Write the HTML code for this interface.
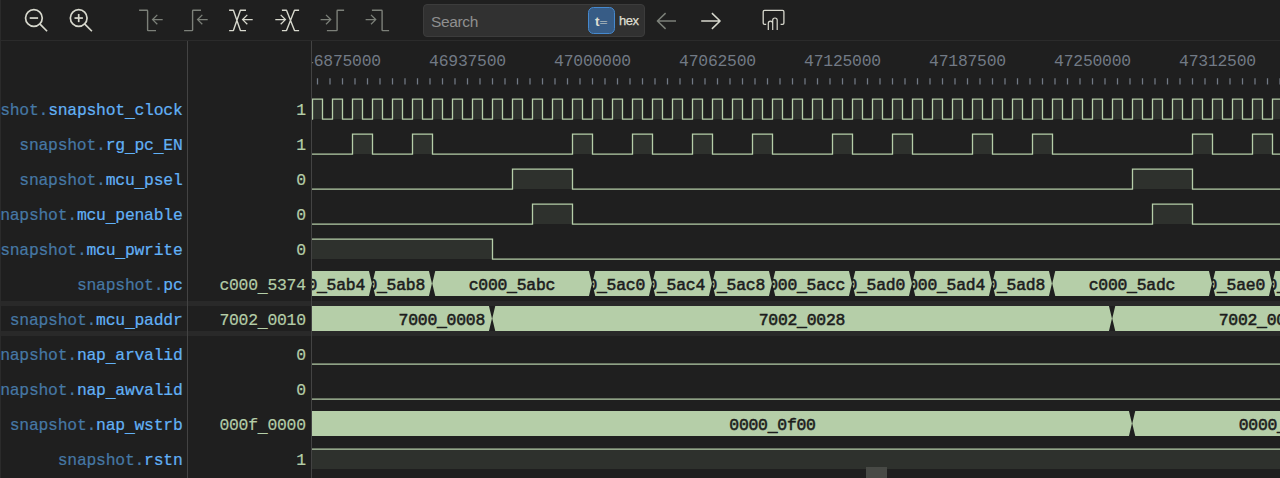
<!DOCTYPE html>
<html lang="en"><head><meta charset="utf-8"><title>VaporView</title>
<style>
html,body{margin:0;padding:0;background:#1f1f1f;}
body{width:1280px;height:478px;overflow:hidden;position:relative;font-family:"Liberation Sans", sans-serif;}
#app{position:absolute;left:0;top:0;width:1280px;height:478px;overflow:hidden;background:#1f1f1f;}
.abs{position:absolute;}
#leftedge{left:0;top:0;width:1px;height:478px;background:#2b2b2b;}
#toolbar{left:0;top:0;width:1280px;height:40px;border-bottom:1px solid #2b2b2b;}
#toolbar svg{position:absolute;left:0;top:0;}
#search{left:423px;top:4px;width:220px;height:31px;border:1px solid #3c3c3c;border-radius:4px;background:#313131;}
#ph{left:431px;top:12px;font-size:15.5px;line-height:20px;color:#8f8f8f;letter-spacing:-0.35px;}
#teq{left:587.9px;top:6.8px;width:25.2px;height:25.1px;border:1px solid #4589cf;border-radius:5.5px;background:#375c86;}
#teqt{left:594.9px;top:10.8px;font-size:13.5px;line-height:20px;color:#deded2;font-weight:bold;white-space:nowrap;}
#teqt span{font-weight:normal;font-size:14.5px;display:inline-block;position:relative;top:1.6px;left:-0.1px;transform:scaleY(0.64);}
#hex{left:618.9px;top:10.5px;font-size:13px;line-height:20px;color:#deded2;-webkit-text-stroke:0.25px #deded2;letter-spacing:-0.4px;}
.vline{top:41px;width:1px;height:437px;background:#434343;}
.sel{left:1px;width:1279px;height:5px;background:#292929;}
#labels{left:1px;top:91px;width:186px;height:387px;overflow:hidden;}
#values{left:188px;top:91px;width:123px;height:387px;overflow:hidden;}
.lab,.val{position:absolute;white-space:nowrap;font-family:"Liberation Mono", "DejaVu Sans Mono", monospace;font-size:16.4px;letter-spacing:-0.24px;line-height:35px;height:35px;-webkit-text-stroke:0.2px currentColor;}
.lab{right:4.5px;color:#62b1f6;}
u{text-decoration:none;position:relative;top:2px;}
.seg u{top:1.4px;}
.lab i{font-style:normal;color:#4678a5;-webkit-text-stroke:0.2px #4678a5;}
.val{right:5.2px;color:#b5cea8;}
#vp{left:312px;top:41px;width:968px;height:437px;overflow:hidden;}
#vp svg{position:absolute;left:0;top:0;}
.rl{position:absolute;top:8.5px;width:120px;margin-left:-60px;text-align:center;white-space:nowrap;font-family:"Liberation Mono", "DejaVu Sans Mono", monospace;font-size:16.4px;letter-spacing:-0.24px;line-height:24px;color:#727a85;}
.seg{position:absolute;height:25px;overflow:hidden;}
.seg span{position:absolute;top:2px;white-space:nowrap;font-family:"Liberation Mono", "DejaVu Sans Mono", monospace;font-size:16.4px;letter-spacing:-0.24px;line-height:25px;color:#1c1c1c;-webkit-text-stroke:0.55px #1c1c1c;}
.seg span.r{right:7.5px;}
.seg span.c{left:50%;transform:translateX(-50%);margin-left:-0.1px;}
#sb{left:0;top:427.8px;width:968px;height:10px;background:#1f1f1f;}
#thumb{left:554px;top:426px;width:21px;height:11px;background:#484a46;}
</style></head><body><div id="app">
<div class="abs sel" style="top:301px"></div><div class="abs sel" style="top:331px"></div>
<div id="vp" class="abs">
<svg width="968" height="437" viewBox="0 0 968 437">
<path d="M5.5 37.3v6.25M18 37.3v6.25M30.5 37.3v6.25M43 37.3v6.25M55.5 37.3v6.25M68 37.3v6.25M80.5 37.3v6.25M93 37.3v6.25M105.5 37.3v6.25M118 37.3v6.25M130.5 37.3v6.25M143 37.3v6.25M155.5 37.3v6.25M168 37.3v6.25M180.5 37.3v6.25M193 37.3v6.25M205.5 37.3v6.25M218 37.3v6.25M230.5 37.3v6.25M243 37.3v6.25M255.5 37.3v6.25M268 37.3v6.25M280.5 37.3v6.25M293 37.3v6.25M305.5 37.3v6.25M318 37.3v6.25M330.5 37.3v6.25M343 37.3v6.25M355.5 37.3v6.25M368 37.3v6.25M380.5 37.3v6.25M393 37.3v6.25M405.5 37.3v6.25M418 37.3v6.25M430.5 37.3v6.25M443 37.3v6.25M455.5 37.3v6.25M468 37.3v6.25M480.5 37.3v6.25M493 37.3v6.25M505.5 37.3v6.25M518 37.3v6.25M530.5 37.3v6.25M543 37.3v6.25M555.5 37.3v6.25M568 37.3v6.25M580.5 37.3v6.25M593 37.3v6.25M605.5 37.3v6.25M618 37.3v6.25M630.5 37.3v6.25M643 37.3v6.25M655.5 37.3v6.25M668 37.3v6.25M680.5 37.3v6.25M693 37.3v6.25M705.5 37.3v6.25M718 37.3v6.25M730.5 37.3v6.25M743 37.3v6.25M755.5 37.3v6.25M768 37.3v6.25M780.5 37.3v6.25M793 37.3v6.25M805.5 37.3v6.25M818 37.3v6.25M830.5 37.3v6.25M843 37.3v6.25M855.5 37.3v6.25M868 37.3v6.25M880.5 37.3v6.25M893 37.3v6.25M905.5 37.3v6.25M918 37.3v6.25M930.5 37.3v6.25M943 37.3v6.25M955.5 37.3v6.25M968 37.3v6.25" stroke="#727a85" stroke-width="1.25" fill="none"/>
<path d="M0.5 58.1H10.5V78.1H0.5ZM20.5 58.1H30.5V78.1H20.5ZM40.5 58.1H50.5V78.1H40.5ZM60.5 58.1H70.5V78.1H60.5ZM80.5 58.1H90.5V78.1H80.5ZM100.5 58.1H110.5V78.1H100.5ZM120.5 58.1H130.5V78.1H120.5ZM140.5 58.1H150.5V78.1H140.5ZM160.5 58.1H170.5V78.1H160.5ZM180.5 58.1H190.5V78.1H180.5ZM200.5 58.1H210.5V78.1H200.5ZM220.5 58.1H230.5V78.1H220.5ZM240.5 58.1H250.5V78.1H240.5ZM260.5 58.1H270.5V78.1H260.5ZM280.5 58.1H290.5V78.1H280.5ZM300.5 58.1H310.5V78.1H300.5ZM320.5 58.1H330.5V78.1H320.5ZM340.5 58.1H350.5V78.1H340.5ZM360.5 58.1H370.5V78.1H360.5ZM380.5 58.1H390.5V78.1H380.5ZM400.5 58.1H410.5V78.1H400.5ZM420.5 58.1H430.5V78.1H420.5ZM440.5 58.1H450.5V78.1H440.5ZM460.5 58.1H470.5V78.1H460.5ZM480.5 58.1H490.5V78.1H480.5ZM500.5 58.1H510.5V78.1H500.5ZM520.5 58.1H530.5V78.1H520.5ZM540.5 58.1H550.5V78.1H540.5ZM560.5 58.1H570.5V78.1H560.5ZM580.5 58.1H590.5V78.1H580.5ZM600.5 58.1H610.5V78.1H600.5ZM620.5 58.1H630.5V78.1H620.5ZM640.5 58.1H650.5V78.1H640.5ZM660.5 58.1H670.5V78.1H660.5ZM680.5 58.1H690.5V78.1H680.5ZM700.5 58.1H710.5V78.1H700.5ZM720.5 58.1H730.5V78.1H720.5ZM740.5 58.1H750.5V78.1H740.5ZM760.5 58.1H770.5V78.1H760.5ZM780.5 58.1H790.5V78.1H780.5ZM800.5 58.1H810.5V78.1H800.5ZM820.5 58.1H830.5V78.1H820.5ZM840.5 58.1H850.5V78.1H840.5ZM860.5 58.1H870.5V78.1H860.5ZM880.5 58.1H890.5V78.1H880.5ZM900.5 58.1H910.5V78.1H900.5ZM920.5 58.1H930.5V78.1H920.5ZM940.5 58.1H950.5V78.1H940.5ZM960.5 58.1H970.5V78.1H960.5Z" fill="#2e312d"/>
<path d="M-0.5 78.1H0.5V58.1H10.5V78.1H20.5V58.1H30.5V78.1H40.5V58.1H50.5V78.1H60.5V58.1H70.5V78.1H80.5V58.1H90.5V78.1H100.5V58.1H110.5V78.1H120.5V58.1H130.5V78.1H140.5V58.1H150.5V78.1H160.5V58.1H170.5V78.1H180.5V58.1H190.5V78.1H200.5V58.1H210.5V78.1H220.5V58.1H230.5V78.1H240.5V58.1H250.5V78.1H260.5V58.1H270.5V78.1H280.5V58.1H290.5V78.1H300.5V58.1H310.5V78.1H320.5V58.1H330.5V78.1H340.5V58.1H350.5V78.1H360.5V58.1H370.5V78.1H380.5V58.1H390.5V78.1H400.5V58.1H410.5V78.1H420.5V58.1H430.5V78.1H440.5V58.1H450.5V78.1H460.5V58.1H470.5V78.1H480.5V58.1H490.5V78.1H500.5V58.1H510.5V78.1H520.5V58.1H530.5V78.1H540.5V58.1H550.5V78.1H560.5V58.1H570.5V78.1H580.5V58.1H590.5V78.1H600.5V58.1H610.5V78.1H620.5V58.1H630.5V78.1H640.5V58.1H650.5V78.1H660.5V58.1H670.5V78.1H680.5V58.1H690.5V78.1H700.5V58.1H710.5V78.1H720.5V58.1H730.5V78.1H740.5V58.1H750.5V78.1H760.5V58.1H770.5V78.1H780.5V58.1H790.5V78.1H800.5V58.1H810.5V78.1H820.5V58.1H830.5V78.1H840.5V58.1H850.5V78.1H860.5V58.1H870.5V78.1H880.5V58.1H890.5V78.1H900.5V58.1H910.5V78.1H920.5V58.1H930.5V78.1H940.5V58.1H950.5V78.1H960.5V58.1H970.5V78.1H973" stroke="#b5cea8" stroke-width="1.3" fill="none" stroke-linejoin="miter"/>
<path d="M40.5 93.1H60.5V113.1H40.5ZM100.5 93.1H120.5V113.1H100.5ZM260.5 93.1H280.5V113.1H260.5ZM320.5 93.1H340.5V113.1H320.5ZM380.5 93.1H400.5V113.1H380.5ZM440.5 93.1H460.5V113.1H440.5ZM520.5 93.1H540.5V113.1H520.5ZM580.5 93.1H600.5V113.1H580.5ZM660.5 93.1H680.5V113.1H660.5ZM720.5 93.1H740.5V113.1H720.5ZM880.5 93.1H900.5V113.1H880.5ZM940.5 93.1H960.5V113.1H940.5Z" fill="#2e312d"/>
<path d="M-0.5 113.1H40.5V93.1H60.5V113.1H100.5V93.1H120.5V113.1H260.5V93.1H280.5V113.1H320.5V93.1H340.5V113.1H380.5V93.1H400.5V113.1H440.5V93.1H460.5V113.1H520.5V93.1H540.5V113.1H580.5V93.1H600.5V113.1H660.5V93.1H680.5V113.1H720.5V93.1H740.5V113.1H880.5V93.1H900.5V113.1H940.5V93.1H960.5V113.1H973" stroke="#b5cea8" stroke-width="1.3" fill="none" stroke-linejoin="miter"/>
<path d="M200.5 128.1H260.5V148.1H200.5ZM820.5 128.1H880.5V148.1H820.5Z" fill="#2e312d"/>
<path d="M-0.5 148.1H200.5V128.1H260.5V148.1H820.5V128.1H880.5V148.1H973" stroke="#b5cea8" stroke-width="1.3" fill="none" stroke-linejoin="miter"/>
<path d="M220.5 163.1H260.5V183.1H220.5ZM840.5 163.1H880.5V183.1H840.5Z" fill="#2e312d"/>
<path d="M-0.5 183.1H220.5V163.1H260.5V183.1H840.5V163.1H880.5V183.1H973" stroke="#b5cea8" stroke-width="1.3" fill="none" stroke-linejoin="miter"/>
<path d="M-0.5 198.1H180.5V218.1H-0.5Z" fill="#2e312d"/>
<path d="M-0.5 198.1H180.5V218.1H973" stroke="#b5cea8" stroke-width="1.3" fill="none" stroke-linejoin="miter"/>
<path d="M-0.5 323.1H973" stroke="#b5cea8" stroke-width="1.3" fill="none" stroke-linejoin="miter"/>
<path d="M-0.5 358.1H973" stroke="#b5cea8" stroke-width="1.3" fill="none" stroke-linejoin="miter"/>
<path d="M-0.5 408.1H973V428.1H-0.5Z" fill="#2e312d"/>
<path d="M-0.5 408.1H973" stroke="#b5cea8" stroke-width="1.3" fill="none" stroke-linejoin="miter"/>
<path d="M-59.75 242.5L-56.75 230H56.95L59.95 242.5L56.95 255H-56.75ZM60.25 242.5L63.25 230H116.95L119.95 242.5L116.95 255H63.25ZM120.25 242.5L123.25 230H276.95L279.95 242.5L276.95 255H123.25ZM280.25 242.5L283.25 230H336.95L339.95 242.5L336.95 255H283.25ZM340.25 242.5L343.25 230H396.95L399.95 242.5L396.95 255H343.25ZM400.25 242.5L403.25 230H456.95L459.95 242.5L456.95 255H403.25ZM460.25 242.5L463.25 230H536.95L539.95 242.5L536.95 255H463.25ZM540.25 242.5L543.25 230H596.95L599.95 242.5L596.95 255H543.25ZM600.25 242.5L603.25 230H676.95L679.95 242.5L676.95 255H603.25ZM680.25 242.5L683.25 230H736.95L739.95 242.5L736.95 255H683.25ZM740.25 242.5L743.25 230H896.95L899.95 242.5L896.95 255H743.25ZM900.25 242.5L903.25 230H956.95L959.95 242.5L956.95 255H903.25ZM960.25 242.5L963.25 230H1016.95L1019.95 242.5L1016.95 255H963.25Z" fill="#b5cea8"/>
<path d="M-119.75 277.5L-116.75 265H176.95L179.95 277.5L176.95 290H-116.75ZM180.25 277.5L183.25 265H796.95L799.95 277.5L796.95 290H183.25ZM800.25 277.5L803.25 265H1096.95L1099.95 277.5L1096.95 290H803.25Z" fill="#b5cea8"/>
<path d="M-119.75 382.5L-116.75 370H816.95L819.95 382.5L816.95 395H-116.75ZM820.25 382.5L823.25 370H1116.95L1119.95 382.5L1116.95 395H823.25Z" fill="#b5cea8"/>
</svg>
<div class="rl" style="left:30.5px">46875000</div><div class="rl" style="left:155.5px">46937500</div><div class="rl" style="left:280.5px">47000000</div><div class="rl" style="left:405.5px">47062500</div><div class="rl" style="left:530.5px">47125000</div><div class="rl" style="left:655.5px">47187500</div><div class="rl" style="left:780.5px">47250000</div><div class="rl" style="left:905.5px">47312500</div>
<div class="seg" style="left:-1.5px;top:230px;width:62px"><span class="r">c000<u>_</u>5ab4</span></div><div class="seg" style="left:59.5px;top:230px;width:61px"><span class="r">c000<u>_</u>5ab8</span></div><div class="seg" style="left:119.5px;top:230px;width:161px"><span class="c">c000<u>_</u>5abc</span></div><div class="seg" style="left:279.5px;top:230px;width:61px"><span class="r">c000<u>_</u>5ac0</span></div><div class="seg" style="left:339.5px;top:230px;width:61px"><span class="r">c000<u>_</u>5ac4</span></div><div class="seg" style="left:399.5px;top:230px;width:61px"><span class="r">c000<u>_</u>5ac8</span></div><div class="seg" style="left:459.5px;top:230px;width:81px"><span class="r">c000<u>_</u>5acc</span></div><div class="seg" style="left:539.5px;top:230px;width:61px"><span class="r">c000<u>_</u>5ad0</span></div><div class="seg" style="left:599.5px;top:230px;width:81px"><span class="r">c000<u>_</u>5ad4</span></div><div class="seg" style="left:679.5px;top:230px;width:61px"><span class="r">c000<u>_</u>5ad8</span></div><div class="seg" style="left:739.5px;top:230px;width:161px"><span class="c">c000<u>_</u>5adc</span></div><div class="seg" style="left:899.5px;top:230px;width:61px"><span class="r">c000<u>_</u>5ae0</span></div><div class="seg" style="left:959.5px;top:230px;width:61px"><span class="r">c000<u>_</u>5ae4</span></div>
<div class="seg" style="left:-1.5px;top:265px;width:182px"><span class="r">7000<u>_</u>0008</span></div><div class="seg" style="left:179.5px;top:265px;width:621px"><span class="c">7002<u>_</u>0028</span></div><div class="seg" style="left:799.5px;top:265px;width:301px"><span class="c">7002<u>_</u>0010</span></div>
<div class="seg" style="left:0;top:370px;width:820.5px"><span class="c" style="left:460.6px">0000<u>_</u>0f00</span></div><div class="seg" style="left:819.5px;top:370px;width:301px"><span class="c">0000<u>_</u>0f00</span></div>
<div id="sb" class="abs"></div><div id="thumb" class="abs"></div>
</div>
<div id="labels" class="abs"><div class="lab" style="top:2px"><i>snapshot.</i>snapshot<u>_</u>clock</div><div class="lab" style="top:37px"><i>snapshot.</i>rg<u>_</u>pc<u>_</u>EN</div><div class="lab" style="top:72px"><i>snapshot.</i>mcu<u>_</u>psel</div><div class="lab" style="top:107px"><i>snapshot.</i>mcu<u>_</u>penable</div><div class="lab" style="top:142px"><i>snapshot.</i>mcu<u>_</u>pwrite</div><div class="lab" style="top:177px"><i>snapshot.</i>pc</div><div class="lab" style="top:212px"><i>snapshot.</i>mcu<u>_</u>paddr</div><div class="lab" style="top:247px"><i>snapshot.</i>nap<u>_</u>arvalid</div><div class="lab" style="top:282px"><i>snapshot.</i>nap<u>_</u>awvalid</div><div class="lab" style="top:317px"><i>snapshot.</i>nap<u>_</u>wstrb</div><div class="lab" style="top:352px"><i>snapshot.</i>rstn</div></div>
<div id="values" class="abs"><div class="val" style="top:2px">1</div><div class="val" style="top:37px">1</div><div class="val" style="top:72px">0</div><div class="val" style="top:107px">0</div><div class="val" style="top:142px">0</div><div class="val" style="top:177px">c000<u>_</u>5374</div><div class="val" style="top:212px">7002<u>_</u>0010</div><div class="val" style="top:247px">0</div><div class="val" style="top:282px">0</div><div class="val" style="top:317px">000f<u>_</u>0000</div><div class="val" style="top:352px">1</div></div>
<div class="abs vline" style="left:187px"></div><div class="abs vline" style="left:311px"></div>
<div id="toolbar" class="abs">
<svg width="1280" height="40" viewBox="0 0 1280 40" fill="none" stroke-width="1.7" stroke-linecap="butt" stroke-linejoin="round">
<g stroke="#d7d8cd"><circle cx="33.9" cy="18.05" r="8.35"/><path d="M39.8 23.95L47.1 31.25"/>
<path d="M29.7 18.05H38.1"/>
</g>
<g stroke="#d7d8cd"><circle cx="78.7" cy="18.05" r="8.35"/><path d="M84.6 23.95L91.9 31.25"/>
<path d="M74.5 18.05H82.9"/>
<path d="M78.7 13.95V22.15"/>
</g>
<path stroke="#7c8079" stroke-width="1.4" d="M139.1 10.3H146.9Q147.6 10.3 147.6 11V29.9Q147.6 30.6 148.3 30.6H156"/>
<path stroke="#7c8079" stroke-width="1.3" stroke-linejoin="miter" d="M162.7 19.6H153M157.3 14.9L152.6 19.6L157.3 24.3"/>
<path stroke="#7c8079" stroke-width="1.4" d="M184.1 30.6H191.9Q192.6 30.6 192.6 29.9V11Q192.6 10.3 193.3 10.3H201"/>
<path stroke="#7c8079" stroke-width="1.3" stroke-linejoin="miter" d="M207.7 19.6H198M202.3 14.9L197.6 19.6L202.3 24.3"/>
<path stroke="#d7d8cd" stroke-width="1.4" d="M229.1 10.3H233.4L240.4 30.6H246M229.1 30.6H233.4L240.4 10.3H246"/>
<path stroke="#d7d8cd" stroke-width="1.3" stroke-linejoin="miter" d="M252.7 19.6H243M247.3 14.9L242.6 19.6L247.3 24.3"/>
<path stroke="#d7d8cd" stroke-width="1.4" d="M281.9 10.3H286.5L294.5 30.6H299.1M281.9 30.6H286.5L294.5 10.3H299.1"/>
<path stroke="#d7d8cd" stroke-width="1.3" stroke-linejoin="miter" d="M275.3 19.6H285M280.7 14.9L285.4 19.6L280.7 24.3"/>
<path stroke="#7c8079" stroke-width="1.4" d="M326.9 30.6H336.4Q337.1 30.6 337.1 29.9V11Q337.1 10.3 337.8 10.3H344.1"/>
<path stroke="#7c8079" stroke-width="1.3" stroke-linejoin="miter" d="M320.6 19.6H330.3M326 14.9L330.7 19.6L326 24.3"/>
<path stroke="#7c8079" stroke-width="1.4" d="M371.9 10.3H381.4Q382.1 10.3 382.1 11V29.9Q382.1 30.6 382.8 30.6H389.1"/>
<path stroke="#7c8079" stroke-width="1.3" stroke-linejoin="miter" d="M365.6 19.6H375.3M371 14.9L375.7 19.6L371 24.3"/>
<path stroke="#7c8079" stroke-width="1.5" d="M676 21H658M665.6 13.1L657.4 21L665.6 28.9"/>
<path stroke="#d7d8cd" stroke-width="1.5" d="M701.2 21H719.6M711.9 13.1L720.1 21L711.9 28.9"/>
<path stroke="#d7d8cd" stroke-width="1.3" d="M766.2 24.4H764.6Q763.2 24.4 763.2 23V11.7Q763.2 10.3 764.6 10.3H782.5Q783.9 10.3 783.9 11.7V23Q783.9 24.4 782.5 24.4H780.6"/>
<path stroke="#d7d8cd" stroke-width="1.2" d="M768.3 30V23.4Q768.3 21.2 770.5 21.2Q772.7 21.2 772.7 23.4V30M772.7 23.4V20.2Q772.7 18 774.95 18Q777.2 18 777.2 20.2V30"/>
</svg>
<div id="search" class="abs"></div><div id="ph" class="abs">Search</div><div id="teq" class="abs"></div><div id="teqt" class="abs">t<span>=</span></div><div id="hex" class="abs">hex</div>
</div>
<div id="leftedge" class="abs"></div>
</div></body></html>
